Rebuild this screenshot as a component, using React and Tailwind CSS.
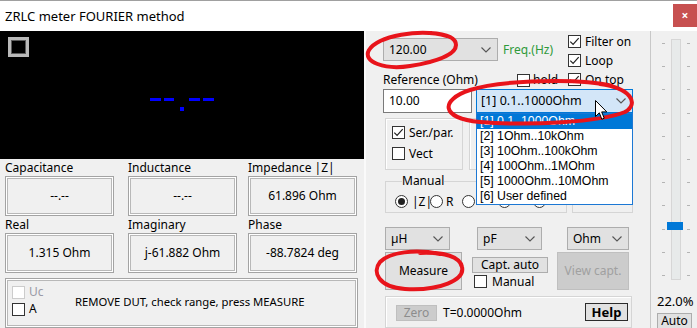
import React from "react";

const Chevron = ({ color = "#555555" }) => (
  <svg width="10" height="6" viewBox="0 0 10 6" className="shrink-0">
    <path d="M0.5 0.5 L5 5 L9.5 0.5" fill="none" stroke={color} strokeWidth="1.1" />
  </svg>
);

function Check({ checked, disabled }) {
  return (
    <span
      className={
        disabled
          ? "w-[13px] h-[13px] border border-[#cccccc] bg-white flex items-center justify-center shrink-0"
          : "w-[13px] h-[13px] border border-[#333333] bg-white flex items-center justify-center shrink-0"
      }
    >
      {checked && (
        <svg width="11" height="11" viewBox="0 0 11 11">
          <path d="M1.3 5.6 L4.1 8.4 L9.7 2.2" fill="none" stroke="#222222" strokeWidth="1.2" />
        </svg>
      )}
    </span>
  );
}

function Radio({ on }) {
  return (
    <span className="w-[13px] h-[13px] rounded-full border border-[#333333] bg-white flex items-center justify-center shrink-0">
      {on && <span className="w-[7px] h-[7px] rounded-full bg-[#222222]" />}
    </span>
  );
}

function Combo({ className, text }) {
  return (
    <div
      className={`flex items-center justify-between bg-[#e1e1e1] border border-[#adadad] pl-[5px] pr-[6px] ${className}`}
    >
      <span>{text}</span>
      <Chevron />
    </div>
  );
}

const boxCls =
  "border border-[#a3a3a3] shadow-[inset_1px_1px_0_#ffffff,inset_-1px_-1px_0_#ffffff,inset_2px_2px_0_#b8b8b8,inset_-2px_-2px_0_#b8b8b8]";

function ValBox({ label, value }) {
  return (
    <div className="flex flex-col">
      <div className="h-[17px] leading-[17px]">{label}</div>
      <div className={`w-[109px] h-[40px] flex items-center justify-center ${boxCls}`}>{value}</div>
    </div>
  );
}

export default function App() {
  return (
    <div className="relative w-[697px] h-[328px] overflow-hidden bg-[#f0f0f0] text-[12px] text-black font-['Noto_Sans',sans-serif] leading-none">
      {/* Title bar */}
      <div className="h-[31px] bg-white border-t border-[#a0a0a0] flex items-start justify-between">
        <div className="pl-[5px] pt-[7px] text-[13px] leading-[16px]">ZRLC meter FOURIER method</div>
        <div className="mt-[3px] w-[24px] h-[23px] bg-[#c75050] flex items-center justify-center text-white text-[12px] font-bold">
          ×
        </div>
      </div>

      <div className="flex h-[297px]">
        {/* Left column */}
        <div className="w-[364px] shrink-0 flex flex-col">
          <div className="relative h-[132px] bg-black">
            <div className="absolute left-[8px] top-[6px] w-[21px] h-[20px] border-[3px] border-[#b9b9b9] shadow-[inset_0_0_0_1px_#5a5a5a]" />
            <svg className="absolute left-0 top-0" width="364" height="132">
              <rect x="150" y="67" width="11" height="3" fill="#0000ff" />
              <rect x="164" y="67" width="10" height="3" fill="#0000ff" />
              <rect x="180" y="76" width="4" height="4" fill="#0000ff" />
              <rect x="189" y="67" width="11" height="3" fill="#0000ff" />
              <rect x="203" y="67" width="11" height="3" fill="#0000ff" />
            </svg>
          </div>
          <div className="grid grid-cols-[123px_120px_110px] pl-[5px]">
            <ValBox label="Capacitance" value="--.--" />
            <ValBox label="Inductance" value="--.--" />
            <ValBox label="Impedance |Z|" value="61.896 Ohm" />
            <ValBox label="Real" value="1.315 Ohm" />
            <ValBox label="Imaginary" value="j-61.882 Ohm" />
            <ValBox label="Phase" value="-88.7824 deg" />
          </div>
          <div className={`ml-[5px] mt-[5px] w-[353px] h-[52px] flex ${boxCls}`}>
            <div className="w-[69px] pl-[6px] pt-[7px] flex flex-col gap-[4px]">
              <div className="flex items-center gap-[4px] h-[13px]">
                <Check disabled />
                <span className="text-[#9a9aa6]">Uc</span>
              </div>
              <div className="flex items-center gap-[4px] h-[13px]">
                <Check />
                <span>A</span>
              </div>
            </div>
            <div className="pt-[17px] text-[11.3px]">REMOVE DUT, check range, press MEASURE</div>
          </div>
        </div>

        {/* Right panel */}
        <div className="w-[286px] shrink-0 border-l-2 border-[#fafafa] pl-[17px] flex flex-col">
          {/* top block */}
          <div className="flex h-[58px]">
            <div className="w-[185px] flex flex-col">
              <div className="mt-[7px] flex items-center">
                <Combo className="w-[115px] h-[23px]" text="120.00" />
                <span className="ml-[5px] text-[#2f9a3a]">Freq.(Hz)</span>
              </div>
              <div className="mt-[10px] h-[18px] flex items-center">
                <span className="w-[134px]">Reference (Ohm)</span>
                <Check />
                <span className="ml-[3px]">hold</span>
              </div>
            </div>
            <div className="pt-[4px] flex flex-col gap-[6px]">
              <div className="flex items-center gap-[4px] h-[13px]">
                <Check checked />
                <span>Filter on</span>
              </div>
              <div className="flex items-center gap-[4px] h-[13px]">
                <Check checked />
                <span>Loop</span>
              </div>
              <div className="flex items-center gap-[4px] h-[13px]">
                <Check checked />
                <span>On top</span>
              </div>
            </div>
          </div>

          {/* reference row */}
          <div className="flex gap-[4px] h-[24px]">
            <div className="w-[89px] h-[24px] bg-white border border-[#7a7a7a] flex items-center pl-[5px]">10.00</div>
            <div className="relative w-[157px] h-[24px]">
              <div className="w-full h-full bg-[#d3e6f8] border border-[#0078d7] flex items-center justify-between pl-[4px] pr-[6px] text-[12.5px]">
                <span>[1] 0.1..1000Ohm</span>
                <Chevron />
              </div>
              <div className="absolute left-0 top-full w-[157px] bg-white border border-[#1c78d4] z-10 flex flex-col text-[12.3px] font-['Liberation_Sans',Arial,sans-serif]">
                <div className="h-[15px] leading-[15px] pl-[3px] bg-[#0078d7] text-white">[1] 0.1..1000Ohm</div>
                <div className="h-[15px] leading-[15px] pl-[3px]">[2] 1Ohm..10kOhm</div>
                <div className="h-[15px] leading-[15px] pl-[3px]">[3] 10Ohm..100kOhm</div>
                <div className="h-[15px] leading-[15px] pl-[3px]">[4] 100Ohm..1MOhm</div>
                <div className="h-[15px] leading-[15px] pl-[3px]">[5] 1000Ohm..10MOhm</div>
                <div className="h-[15px] leading-[15px] pl-[3px]">[6] User defined</div>
              </div>
            </div>
          </div>

          {/* group boxes row */}
          <div className="mt-[5px] ml-[2px] flex gap-[6px]">
            <div className="w-[78px] h-[52px] border border-[#d5d5d5] shadow-[inset_1px_1px_0_#ffffff] pl-[6px] pt-[7px] flex flex-col gap-[8px]">
              <div className="flex items-center gap-[4px] h-[13px]">
                <Check checked />
                <span>Ser./par.</span>
              </div>
              <div className="flex items-center gap-[4px] h-[13px]">
                <Check />
                <span>Vect</span>
              </div>
            </div>
            <div className="w-[164px] h-[52px] border border-[#d5d5d5] shadow-[inset_1px_1px_0_#ffffff]" />
          </div>

          {/* Manual row */}
          <div className="mt-[5px] ml-[2px] flex items-start gap-[5px]">
            <fieldset className="w-[182px] h-[38px] border border-[#d5d5d5] pl-[9px]">
              <legend className="ml-[7px] leading-[12px]">Manual</legend>
              <div className="mt-[8px] flex items-center h-[13px]">
                <div className="w-[35px] flex items-center gap-[4px]">
                  <Radio on />
                  <span>|Z|</span>
                </div>
                <div className="w-[32px] flex items-center gap-[3px]">
                  <Radio />
                  <span>R</span>
                </div>
                <div className="w-[36px] flex items-center">
                  <Radio />
                </div>
                <div className="w-[35px] flex items-center">
                  <Radio />
                </div>
                <div className="flex items-center">
                  <Radio />
                </div>
              </div>
            </fieldset>
            <div className="mt-[6px] w-[61px] h-[32px] border border-[#d5d5d5]" />
          </div>

          {/* unit combos */}
          <div className="mt-[14px] ml-[2px] flex">
            <Combo className="w-[65px] h-[23px]" text="µH" />
            <Combo className="ml-[27px] w-[65px] h-[23px]" text="pF" />
            <Combo className="ml-[25px] w-[62px] h-[23px]" text="Ohm" />
          </div>

          {/* buttons */}
          <div className="mt-[2px] ml-[2px] flex">
            <div className="w-[77px] h-[38px] bg-[#e1e1e1] border border-[#adadad] flex items-center justify-center">
              Measure
            </div>
            <div className="ml-[10px] flex flex-col">
              <div className="mt-[5px] w-[76px] h-[16px] bg-[#e1e1e1] border border-[#adadad] flex items-center justify-center">
                Capt. auto
              </div>
              <div className="mt-[2px] ml-[2px] flex items-center gap-[5px] h-[13px]">
                <Check />
                <span>Manual</span>
              </div>
            </div>
            <div className="ml-[9px] w-[72px] h-[38px] bg-[#cccccc] border border-[#bfbfbf] text-[#a0a0a0] flex items-center justify-center">
              View capt.
            </div>
          </div>

          {/* bottom group */}
          <div className="mt-[6px] ml-[2px] w-[247px] h-[40px] border border-[#d5d5d5] shadow-[inset_1px_1px_0_#ffffff] pl-[10px] flex items-start">
            <div className="mt-[8px] w-[41px] h-[16px] bg-[#cccccc] border border-[#bfbfbf] text-[#8c8c8c] flex items-center justify-center">
              Zero
            </div>
            <div className="mt-[8px] ml-[6px] h-[16px] flex items-center">T=0.0000Ohm</div>
            <div className="mt-[6px] ml-auto mr-[3px] w-[43px] h-[18px] bg-[#e1e1e1] border border-[#2b2b2b] font-bold text-[13px] flex items-center justify-center">
              Help
            </div>
          </div>
        </div>

        {/* slider panel */}
        <div className="w-[47px] shrink-0 border-l border-[#c8c8c8] flex flex-col">
          <div className="mt-[8px] pl-[11px] flex gap-[6px]">
            <div className="w-[3px] h-[241px] py-[4px] flex flex-col justify-between">
              {[0, 1, 2, 3, 4, 5, 6, 7, 8, 9, 10].map((i) => (
                <div key={i} className="w-[3px] h-[1px] bg-[#b4b4b4]" />
              ))}
            </div>
            <div className="relative w-[10px] h-[241px] bg-[#e7eaea] border border-[#d6d6d6]">
              <div className="absolute left-[-5px] top-[182px] w-[16px] h-[8px] bg-[#0078d7]" />
            </div>
            <div className="w-[3px] h-[241px] py-[4px] flex flex-col justify-between">
              {[0, 1, 2, 3, 4, 5, 6, 7, 8, 9, 10].map((i) => (
                <div key={i} className="w-[3px] h-[1px] bg-[#b4b4b4]" />
              ))}
            </div>
          </div>
          <div className="mt-[13px] pl-[6px] text-[13px] leading-[16px]">22.0%</div>
          <div className="mt-[4px] ml-[6px] w-[35px] h-[20px] bg-[#e1e1e1] border border-[#adadad] text-[12px] leading-[14px] flex justify-center">
            Auto
          </div>
        </div>
      </div>

      {/* red hand-drawn annotations */}
      <svg className="absolute left-0 top-0 z-20 pointer-events-none" width="697" height="328">
        <g fill="none" stroke="#e8141b" strokeWidth="4" strokeLinecap="round">
          <path d="M447 36 C420 28, 378 36, 369 50 C362 62, 385 70, 410 66 C435 62, 456 55, 456 45 C456 38, 446 34, 430 33" />
          <path d="M612 86 C580 78, 500 80, 470 90 C440 100, 440 118, 480 122 C530 126, 600 122, 625 112 C640 103, 630 88, 600 84" />
          <path d="M440 254 C415 249, 390 252, 380 262 C372 272, 378 287, 405 289 C440 291, 465 280, 462 267 C460 257, 445 252, 420 253" />
        </g>
      </svg>

      {/* mouse cursor */}
      <svg className="absolute left-[595px] top-[100px] z-30 pointer-events-none" width="13" height="21" viewBox="0 0 13 21">
        <path d="M0.5 0.5 L0.5 16.5 L4.3 12.8 L6.8 19.2 L9.2 18.2 L6.7 11.9 L11.8 11.9 Z" fill="#ffffff" stroke="#000000" strokeWidth="1" strokeLinejoin="round" />
      </svg>
    </div>
  );
}
